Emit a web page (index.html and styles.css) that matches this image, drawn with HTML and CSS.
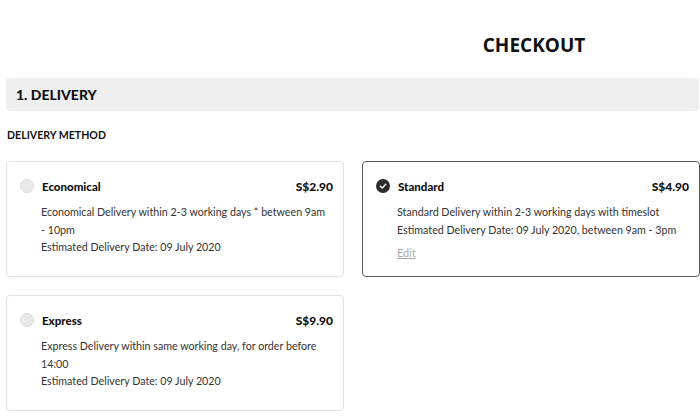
FILE: index.html
```html
<!DOCTYPE html>
<html>
<head>
<meta charset="utf-8">
<link rel="stylesheet" href="styles.css">
</head>
<body>
<div class="page">
  <h1 class="title">CHECKOUT</h1>
  <div class="section-bar">1. DELIVERY</div>
  <div class="method-label">DELIVERY METHOD</div>
  <div class="options">
    <div class="card">
      <div class="card-head">
        <span class="radio"></span>
        <span class="name">Economical</span>
        <span class="price">S$2.90</span>
      </div>
      <div class="desc">
        <p>Economical Delivery within 2-3 working days * between 9am <span class="nowrap">- 10pm</span></p>
        <p>Estimated Delivery Date: 09 July 2020</p>
      </div>
    </div>
    <div class="card selected">
      <div class="card-head">
        <span class="radio checked">
          <svg viewBox="0 0 14 14" width="14" height="14"><circle cx="7" cy="7" r="7" fill="#2b2b2b"/><path d="M4.3 7.2 L6.2 9 L9.8 5.2" fill="none" stroke="#fff" stroke-width="1.4" stroke-linecap="round" stroke-linejoin="round"/></svg>
        </span>
        <span class="name">Standard</span>
        <span class="price">S$4.90</span>
      </div>
      <div class="desc">
        <p>Standard Delivery within 2-3 working days with timeslot</p>
        <p>Estimated Delivery Date: 09 July 2020, between 9am - 3pm</p>
        <a class="edit" href="#">Edit</a>
      </div>
    </div>
    <div class="card">
      <div class="card-head">
        <span class="radio"></span>
        <span class="name">Express</span>
        <span class="price">S$9.90</span>
      </div>
      <div class="desc">
        <p>Express Delivery within same working day, for order before 14:00</p>
        <p>Estimated Delivery Date: 09 July 2020</p>
      </div>
    </div>
  </div>
</div>
</body>
</html>
```

FILE: styles.css
```css
html, body {
  margin: 0;
  padding: 0;
  background: #fff;
}
body {
  font-family: "Lato", "Liberation Sans", sans-serif;
  color: #222;
  overflow: hidden;
}
.page {
  width: 700px;
}
.title {
  margin: 0 0 21px 0;
  padding: 34px 0 0 368px;
  height: 23px;
  text-align: center;
  font-family: "Open Sans", "Liberation Sans", sans-serif;
  font-weight: 700;
  font-size: 19px;
  line-height: 23px;
  color: #111;
}
.section-bar {
  margin: 0 1px 0 6px;
  height: 33px;
  background: #efefef;
  border-radius: 4px;
  padding-left: 10px;
  font-size: 14px;
  font-weight: 900;
  line-height: 33px;
  color: #111;
}
.method-label {
  margin: 16px 0 0 7px;
  font-size: 10.6px;
  font-weight: 700;
  line-height: 16px;
  color: #111;
}
.options {
  margin: 18px 0 0 6px;
  display: grid;
  grid-template-columns: 338px 338px;
  column-gap: 18px;
  row-gap: 18px;
}
.card {
  height: 116px;
  box-sizing: border-box;
  border: 1px solid #e2e2e2;
  border-radius: 4px;
  padding: 16px 10px 0 13px;
}
.card.selected {
  border-color: #5a5a5a;
}
.card-head {
  display: flex;
  align-items: center;
  height: 16px;
}
.radio {
  width: 14px;
  height: 14px;
  box-sizing: border-box;
  border-radius: 50%;
  background: #e9e9e9;
  border: 1px solid #dcdcdc;
  margin-right: 8px;
  flex: none;
}
.radio.checked {
  border: none;
  background: none;
  display: flex;
}
.name {
  flex: 1;
  font-size: 11.5px;
  font-weight: 900;
  color: #111;
}
.price {
  font-size: 12px;
  font-weight: 900;
  color: #111;
}
.desc {
  margin: 9px 0 0 21px;
  font-size: 10.7px;
  line-height: 17.5px;
  color: #333;
}
.desc p {
  margin: 0;
}
.nowrap {
  white-space: nowrap;
}
.edit {
  display: inline-block;
  margin-top: 6px;
  color: #aaa;
  font-size: 11px;
  text-decoration: underline;
}
```
